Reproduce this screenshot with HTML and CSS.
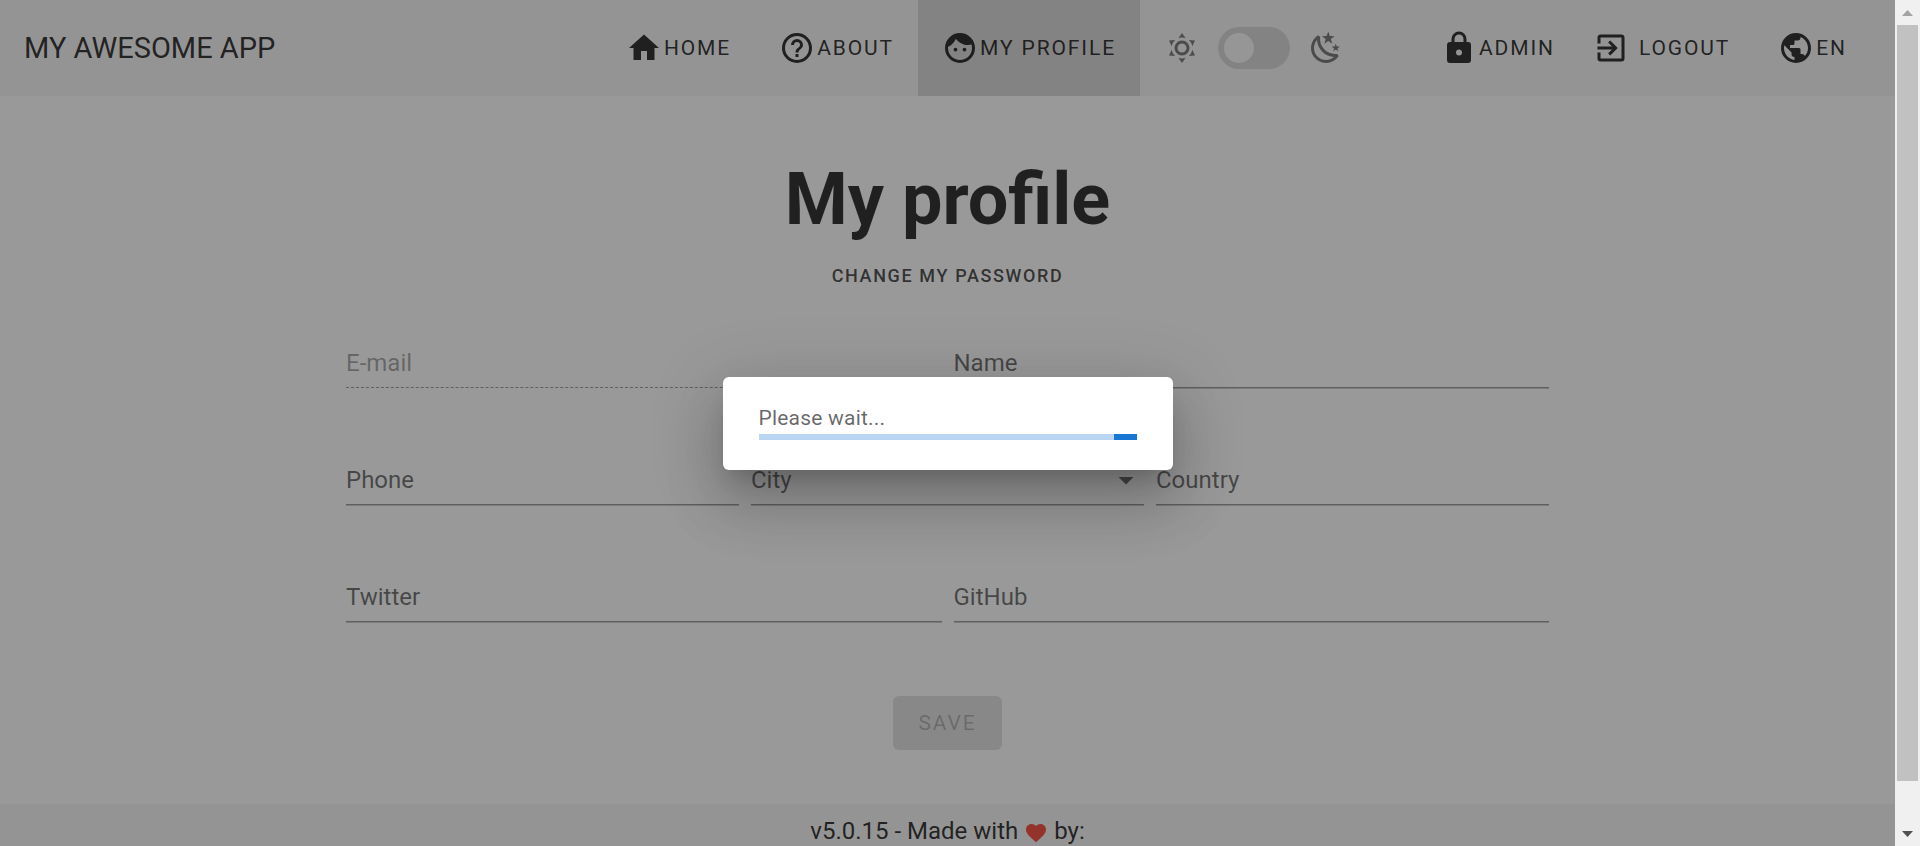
FILE: index.html
```html
<!DOCTYPE html>
<html lang="en">
<head>
<meta charset="utf-8">
<title>My profile</title>
<link rel="stylesheet" href="styles.css">
</head>
<body>
<div class="window">
  <div class="app">
    <header class="bar">
      <span class="bar-title">MY AWESOME APP</span>
      <nav class="nav">
        <a class="nav-link" href="#"><svg class="icon" viewBox="0 0 24 24"><path d="M10,20V14H14V20H19V12H22L12,3L2,12H5V20H10Z"/></svg>HOME</a>
        <a class="nav-link" href="#"><svg class="icon" viewBox="0 0 24 24"><path d="M11,18H13V16H11V18M12,2A10,10 0 0,0 2,12A10,10 0 0,0 12,22A10,10 0 0,0 22,12A10,10 0 0,0 12,2M12,20C7.59,20 4,16.41 4,12C4,7.59 7.59,4 12,4C16.41,4 20,7.59 20,12C20,16.41 16.41,20 12,20M12,6A4,4 0 0,0 8,10H10A2,2 0 0,1 12,8A2,2 0 0,1 14,10C14,12 11,11.75 11,15H13C13,12.75 16,12.5 16,10A4,4 0 0,0 12,6Z"/></svg>ABOUT</a>
        <a class="nav-link active" href="#"><svg class="icon" viewBox="0 0 24 24"><path d="M9,11.75A1.25,1.25 0 0,0 7.75,13A1.25,1.25 0 0,0 9,14.25A1.25,1.25 0 0,0 10.25,13A1.25,1.25 0 0,0 9,11.75M15,11.75A1.25,1.25 0 0,0 13.75,13A1.25,1.25 0 0,0 15,14.25A1.25,1.25 0 0,0 16.25,13A1.25,1.25 0 0,0 15,11.75M12,2A10,10 0 0,0 2,12A10,10 0 0,0 12,22A10,10 0 0,0 22,12A10,10 0 0,0 12,2M12,20C7.59,20 4,16.41 4,12C4,11.71 4,11.42 4.05,11.14C6.41,10.09 8.28,8.16 9.26,5.77C11.07,8.33 14.05,10 17.42,10C18.2,10 18.95,9.91 19.67,9.74C19.88,10.45 20,11.21 20,12C20,16.41 16.41,20 12,20Z"/></svg>MY PROFILE</a>
      </nav>
      <div class="theme">
        <svg class="icon" viewBox="0 0 24 24"><path d="M12,7A5,5 0 0,1 17,12A5,5 0 0,1 12,17A5,5 0 0,1 7,12A5,5 0 0,1 12,7M12,9A3,3 0 0,0 9,12A3,3 0 0,0 12,15A3,3 0 0,0 15,12A3,3 0 0,0 12,9M12,2L14.39,5.42C13.65,5.15 12.84,5 12,5C11.16,5 10.35,5.15 9.61,5.42L12,2M3.34,7L7.5,6.65C6.9,7.16 6.36,7.78 5.94,8.5C5.5,9.24 5.25,10 5.11,10.79L3.34,7M3.36,17L5.12,13.23C5.26,14 5.53,14.78 5.95,15.5C6.37,16.24 6.91,16.86 7.5,17.37L3.36,17M20.65,7L18.88,10.79C18.74,10 18.47,9.23 18.05,8.5C17.63,7.78 17.1,7.15 16.5,6.64L20.65,7M20.64,17L16.5,17.36C17.09,16.85 17.62,16.22 18.04,15.5C18.46,14.77 18.73,14 18.87,13.21L20.64,17M12,22L9.59,18.56C10.33,18.83 11.14,19 12,19C12.82,19 13.63,18.83 14.37,18.56L12,22Z"/></svg>
        <input class="switch" type="checkbox" role="switch" aria-label="Dark theme">
        <svg class="icon" viewBox="0 0 24 24"><path d="M17.75,4.09L15.22,6.03L16.13,9.09L13.5,7.28L10.87,9.09L11.78,6.03L9.25,4.09L12.44,4L13.5,1L14.56,4L17.75,4.09M21.25,11L19.61,12.25L20.2,14.23L18.5,13.06L16.8,14.23L17.39,12.25L15.75,11L17.81,10.95L18.5,9L19.19,10.95L21.25,11M18.97,15.95C19.8,15.87 20.69,17.05 20.16,17.8C19.84,18.25 19.5,18.67 19.08,19.07C15.17,23 8.84,23 4.94,19.07C1.03,15.17 1.03,8.83 4.94,4.93C5.34,4.53 5.76,4.17 6.21,3.85C6.96,3.32 8.14,4.21 8.06,5.04C7.79,7.9 8.75,10.87 10.95,13.06C13.14,15.26 16.1,16.22 18.97,15.95M17.33,17.97C14.5,17.81 11.7,16.64 9.53,14.5C7.36,12.31 6.2,9.5 6.04,6.68C3.23,9.82 3.34,14.64 6.35,17.66C9.37,20.67 14.19,20.78 17.33,17.97Z"/></svg>
      </div>
      <div class="nav">
        <button class="nav-link" type="button"><svg class="icon" viewBox="0 0 24 24"><path d="M12,17A2,2 0 0,0 14,15C14,13.89 13.1,13 12,13A2,2 0 0,0 10,15A2,2 0 0,0 12,17M18,8A2,2 0 0,1 20,10V20A2,2 0 0,1 18,22H6A2,2 0 0,1 4,20V10C4,8.89 4.9,8 6,8H7V6A5,5 0 0,1 12,1A5,5 0 0,1 17,6V8H18M12,3A3,3 0 0,0 9,6V8H15V6A3,3 0 0,0 12,3Z"/></svg>ADMIN</button>
        <button class="nav-link logout" type="button"><svg class="icon" viewBox="0 0 24 24"><path d="M19,3H5C3.89,3 3,3.89 3,5V9H5V5H19V19H5V15H3V19A2,2 0 0,0 5,21H19A2,2 0 0,0 21,19V5C21,3.89 20.1,3 19,3M10.08,15.58L11.5,17L16.5,12L11.5,7L10.08,8.41L12.67,11H3V13H12.67L10.08,15.58Z"/></svg>LOGOUT</button>
        <button class="nav-link" type="button"><svg class="icon" viewBox="0 0 24 24"><path d="M17.9,17.39C17.64,16.59 16.89,16 16,16H15V13A1,1 0 0,0 14,12H8V10H10A1,1 0 0,0 11,9V7H13A2,2 0 0,0 15,5V4.59C17.93,5.77 20,8.64 20,12C20,14.08 19.2,15.97 17.9,17.39M11,19.93C7.05,19.44 4,16.08 4,12C4,11.38 4.08,10.78 4.21,10.21L9,15V16A2,2 0 0,0 11,18M12,2A10,10 0 0,0 2,12A10,10 0 0,0 12,22A10,10 0 0,0 22,12A10,10 0 0,0 12,2Z"/></svg>EN</button>
      </div>
    </header>

    <main class="main">
      <h1 class="heading">My profile</h1>
      <button class="password" type="button">CHANGE MY PASSWORD</button>
      <form class="form">
        <div class="row two">
          <div class="field disabled"><label for="email">E-mail</label><input id="email" type="email" disabled></div>
          <div class="field"><label for="name">Name</label><input id="name" type="text"></div>
        </div>
        <div class="row three">
          <div class="field"><label for="phone">Phone</label><input id="phone" type="tel"></div>
          <div class="field"><label for="city">City</label><select id="city"><option value=""></option></select><svg class="icon arrow" viewBox="0 0 24 24"><path d="M7,10L12,15L17,10H7Z"/></svg></div>
          <div class="field"><label for="country">Country</label><input id="country" type="text"></div>
        </div>
        <div class="row two">
          <div class="field"><label for="twitter">Twitter</label><input id="twitter" type="text"></div>
          <div class="field"><label for="github">GitHub</label><input id="github" type="text"></div>
        </div>
        <button class="save" type="submit" disabled>SAVE</button>
      </form>
    </main>

    <footer class="footer">
      <span>v5.0.15 - Made with</span>
      <svg class="heart" viewBox="0 0 24 24"><path d="M12,21.35L10.55,20.03C5.4,15.36 2,12.27 2,8.5C2,5.41 4.42,3 7.5,3C9.24,3 10.91,3.81 12,5.08C13.09,3.81 14.76,3 16.5,3C19.58,3 22,5.41 22,8.5C22,12.27 18.6,15.36 13.45,20.03L12,21.35Z"/></svg>
      <span>by:</span>
    </footer>

    <div class="overlay">
      <div class="dialog" role="dialog" aria-labelledby="wait">
        <div class="dialog-text" id="wait">Please wait...</div>
        <div class="progress" role="progressbar" aria-labelledby="wait"><div class="progress-value"></div></div>
      </div>
    </div>
  </div>

  <div class="scrollbar" aria-hidden="true">
    <svg class="scroll-arrow" viewBox="0 0 25 25"><path fill="#a3a3a3" d="M7,16L12.5,10L18,16Z"/></svg>
    <div class="track"><div class="thumb"></div></div>
    <svg class="scroll-arrow" viewBox="0 0 25 25"><path fill="#505050" d="M7,10L12.5,16L18,10Z"/></svg>
  </div>
</div>
</body>
</html>
```

FILE: styles.css
```css
* { box-sizing: border-box; }

body {
  margin: 0;
  font-family: Roboto, "Liberation Sans", sans-serif;
  font-size: 24px;
  line-height: 36px;
  color: rgba(0, 0, 0, .87);
}

button, input, select { font: inherit; color: inherit; border: 0; background: none; }

.window { display: flex; height: 100vh; overflow: hidden; }

.app {
  position: relative;
  flex: 1;
  min-width: 0;
  overflow: hidden;
  background: #fff;
}

.icon { width: 36px; height: 36px; flex: none; fill: currentColor; }

/* App bar */
.bar {
  display: flex;
  align-items: center;
  height: 96px;
  padding: 0 24px;
  background: #f5f5f5;
}

.bar-title { font-size: 29px; font-weight: 400; margin-right: auto; white-space: nowrap; }

.nav { display: flex; align-self: stretch; }

.nav-link {
  display: flex;
  align-items: center;
  gap: 2px;
  padding: 0 24px;
  font-size: 21px;
  font-weight: 400;
  letter-spacing: .09em;
  white-space: nowrap;
  color: inherit;
  text-decoration: none;
}

.active { background: #d6d6d6; }

.logout { gap: 10px; padding-left: 14px; }

.theme {
  display: flex;
  align-items: center;
  gap: 18px;
  padding: 0 73px 0 24px;
  color: rgba(0, 0, 0, .54);
}

.switch {
  appearance: none;
  display: flex;
  align-items: center;
  width: 72px;
  height: 42px;
  margin: 0;
  padding: 0 6px;
  border-radius: 21px;
  background: #d6d6d6;
}

.switch::before {
  content: "";
  width: 30px;
  height: 30px;
  border-radius: 50%;
  background: #fafafa;
}

.switch:checked { justify-content: flex-end; }

/* Profile page */
.main {
  display: flex;
  flex-direction: column;
  align-items: center;
  padding: 62px 0 54px;
}

.heading { margin: 0; font-size: 72px; line-height: 84px; font-weight: 700; }

.password {
  height: 42px;
  margin-top: 12px;
  padding: 0 18px;
  font-size: 18px;
  line-height: 21px;
  font-weight: 500;
  letter-spacing: .09em;
  opacity: .87;
}

.form { display: grid; row-gap: 69px; width: calc(100% - 692px); margin-top: 43px; }

.row { display: grid; column-gap: 12px; }
.two { grid-template-columns: 1fr 1fr; }
.three { grid-template-columns: 1fr 1fr 1fr; }

.field {
  display: grid;
  align-items: center;
  height: 49px;
  margin-bottom: -1px;
  border-bottom: 1px solid rgba(0, 0, 0, .42);
  box-shadow: 0 1px rgba(0, 0, 0, .21);
}

.field > * { grid-area: 1 / 1; }
.field label { color: rgba(0, 0, 0, .6); pointer-events: none; }
.field input, .field select { appearance: none; width: 100%; height: 48px; padding: 0; outline: 0; }
.disabled { border-bottom-style: dashed; box-shadow: none; }
.disabled label { color: rgba(0, 0, 0, .38); }
.arrow { justify-self: end; color: rgba(0, 0, 0, .6); pointer-events: none; }

.save {
  justify-self: center;
  height: 54px;
  margin-top: 6px;
  padding: 0 25px;
  border-radius: 6px;
  background: #e0e0e0;
  color: rgba(0, 0, 0, .26);
  font-size: 21px;
  letter-spacing: .09em;
}

/* Footer */
.footer {
  display: flex;
  justify-content: center;
  align-items: center;
  gap: 6px;
  padding: 9px 24px;
  background: #f5f5f5;
}

.heart { width: 24px; height: 24px; margin-top: 4px; fill: #f44336; }

/* Loading dialog */
.overlay {
  position: absolute;
  inset: 0;
  display: grid;
  place-items: center;
  background: rgba(33, 33, 33, .46);
}

.dialog {
  width: 450px;
  padding: 26px 36px 30px;
  border-radius: 6px;
  background: #fff;
  box-shadow: 0 16px 22px -10px rgba(0, 0, 0, .2), 0 36px 57px 4px rgba(0, 0, 0, .14), 0 14px 69px 12px rgba(0, 0, 0, .12);
}

.dialog-text { font-size: 21px; line-height: 31px; letter-spacing: .01em; color: rgba(0, 0, 0, .6); }

.progress { display: flex; justify-content: flex-end; height: 6px; background: #bad6f2; }
.progress-value { width: 6%; background: #1976d2; }

/* Window scroll bar */
.scrollbar {
  display: flex;
  flex-direction: column;
  width: 25px;
  background: #f0f0f0;
}

.scroll-arrow { width: 25px; height: 25px; flex: none; }
.track { flex: 1; padding: 0 2px; }
.thumb { height: 95%; background: #c1c1c1; }
```
